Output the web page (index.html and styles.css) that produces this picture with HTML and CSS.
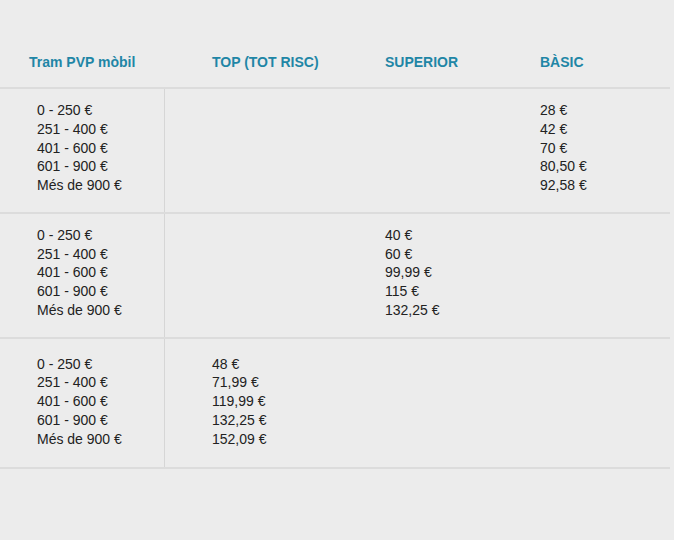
FILE: index.html
```html
<!DOCTYPE html>
<html lang="ca">
<head>
<meta charset="utf-8">
<link rel="stylesheet" href="styles.css">
</head>
<body>
<div class="table">
  <div class="row head">
    <div class="cell first">Tram PVP mòbil</div>
    <div class="cell">TOP (TOT RISC)</div>
    <div class="cell">SUPERIOR</div>
    <div class="cell">BÀSIC</div>
  </div>
  <div class="row group">
    <div class="cell first"><div>0 - 250 €</div><div>251 - 400 €</div><div>401 - 600 €</div><div>601 - 900 €</div><div>Més de 900 €</div></div>
    <div class="cell"></div>
    <div class="cell"></div>
    <div class="cell"><div>28 €</div><div>42 €</div><div>70 €</div><div>80,50 €</div><div>92,58 €</div></div>
  </div>
  <div class="row group">
    <div class="cell first"><div>0 - 250 €</div><div>251 - 400 €</div><div>401 - 600 €</div><div>601 - 900 €</div><div>Més de 900 €</div></div>
    <div class="cell"></div>
    <div class="cell"><div>40 €</div><div>60 €</div><div>99,99 €</div><div>115 €</div><div>132,25 €</div></div>
    <div class="cell"></div>
  </div>
  <div class="row group last">
    <div class="cell first"><div>0 - 250 €</div><div>251 - 400 €</div><div>401 - 600 €</div><div>601 - 900 €</div><div>Més de 900 €</div></div>
    <div class="cell"><div>48 €</div><div>71,99 €</div><div>119,99 €</div><div>132,25 €</div><div>152,09 €</div></div>
    <div class="cell"></div>
    <div class="cell"></div>
  </div>
</div>
</body>
</html>
```

FILE: styles.css
```css
html, body {
  margin: 0;
  background: #ececec;
}
body {
  font-family: "Liberation Sans", Arial, sans-serif;
  color: #222;
  width: 674px;
  height: 540px;
}
.table {
  width: 670px;
}
.row {
  display: grid;
  grid-template-columns: 165px 173px 155px 1fr;
  border-bottom: 2px solid #dcdcdc;
}
.head {
  padding: 53px 0 16px;
  font-weight: bold;
  font-size: 14px;
  line-height: 18px;
  color: #1f86a6;
}
.head .cell {
  padding-left: 47px;
}
.head .cell.first {
  padding-left: 29px;
}
.group .cell {
  font-size: 14px;
  line-height: 18.75px;
  padding: 12px 0 17px 47px;
}
.group.last .cell {
  padding-top: 16px;
  padding-bottom: 19px;
}
.group .cell.first {
  padding-left: 37px;
  border-right: 1px solid #d6d6d6;
}
```
